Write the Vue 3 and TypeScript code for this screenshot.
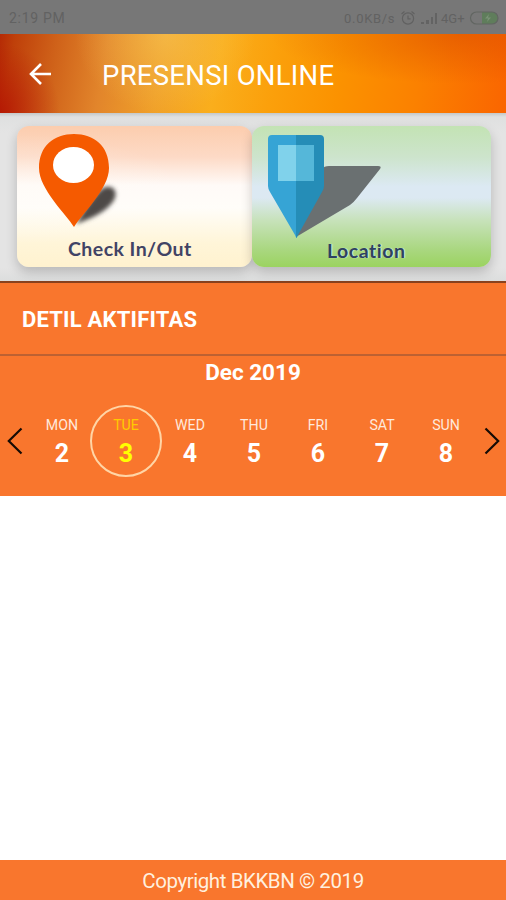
<script setup lang="ts">
import { ref } from 'vue'

interface Day {
  name: string
  date: number
}

const days: Day[] = [
  { name: 'MON', date: 2 },
  { name: 'TUE', date: 3 },
  { name: 'WED', date: 4 },
  { name: 'THU', date: 5 },
  { name: 'FRI', date: 6 },
  { name: 'SAT', date: 7 },
  { name: 'SUN', date: 8 },
]
const selected = ref(3)
</script>

<template>
  <div class="screen">
    <div class="status">
      <span class="time">2:19 PM</span>
      <div class="indicators">
        <span class="speed">0.0KB/s</span>
        <svg width="16" height="16" viewBox="0 0 16 16" fill="none" stroke="#616161" stroke-width="1.2">
          <circle cx="8" cy="8.5" r="5.6" />
          <path d="M8 5.5v3.3h2.600M1.500 4l3-2.500M14.500 4l-3-2.500" />
        </svg>
        <svg class="signal" width="20" height="14" viewBox="0 0 20 14" fill="#636363">
          <path d="M1 11h3v2H1zM6 9h3v4H6zM11 6h2v7h-2zM15 2h2v11h-2z" />
        </svg>
        <span class="network">4G+</span>
        <svg width="31" height="14" viewBox="0 0 31 14" fill="none">
          <path d="M13 1h10a6 6 0 0 1 0 12H13z" fill="#5f7d5b" />
          <rect x="1.500" y="1" width="27.500" height="12" rx="6" stroke="#626662" stroke-width="1.200" />
          <path d="M20 3l-4 4.500h3l-1 3.500 4-4.500h-3z" fill="#7a9276" />
        </svg>
      </div>
    </div>

    <header class="appbar">
      <button class="back" aria-label="Back">
        <svg width="24" height="24" viewBox="0 0 24 24" fill="none" stroke="#fff" stroke-width="2.600">
          <path d="M23 12H3M13 2L3 12l10 10" />
        </svg>
      </button>
      <h1>PRESENSI ONLINE</h1>
    </header>

    <nav class="tiles">
      <button class="tile checkin">
        <svg class="art" width="235" height="141" viewBox="0 0 235 141">
          <defs>
            <filter id="soft" x="-30%" y="-30%" width="160%" height="160%">
              <feGaussianBlur stdDeviation="2.200" />
            </filter>
          </defs>
          <path d="M59 98C68 82 78 66 88 61c9-2 13 5 9 13-5 9-18 17-38 24z" fill="#4d4947" filter="url(#soft)" />
          <path d="M57 101C49 88 22 63 22 42 22 20 37 8 57 8s35 12 35 34c0 21-27 46-35 59z" fill="#f55a00" />
          <ellipse cx="56.500" cy="39" rx="20.500" ry="18" fill="#fff" />
        </svg>
        <span class="label">Check In/Out</span>
      </button>
      <button class="tile location">
        <svg class="art" width="239" height="141" viewBox="0 0 239 141">
          <path d="M44 111L70 43q2-3 7-3h49q4 0 2 3L105 72q-3 4-7 7z" fill="#6a7071" />
          <path d="M45 9H20q-4 0-4 4v47q0 3 2 6l25 43q1 3 2 3z" fill="#36a4d5" />
          <path d="M44 9h24q4 0 4 4v47q0 3-2 6l-24 43q-1 3-2 3z" fill="#258db7" />
          <path d="M26 19h18v36H26z" fill="#80d2eb" />
          <path d="M44 19h18v36H44z" fill="#55b7d9" />
        </svg>
        <span class="label">Location</span>
      </button>
    </nav>

    <section class="activity">
      <h2>DETIL AKTIFITAS</h2>
      <div class="calendar">
        <p class="month">Dec 2019</p>
        <div class="week">
          <button class="arrow" aria-label="Previous week">
            <svg width="16" height="28" viewBox="0 0 16 28" fill="none" stroke="#160b05" stroke-width="2.200">
              <path d="M14.500 1.500L1.800 14l12.700 12.500" />
            </svg>
          </button>
          <div class="days">
            <button
              v-for="day in days"
              :key="day.date"
              class="day"
              :class="{ active: day.date === selected }"
              @click="selected = day.date"
            >
              <span class="name">{{ day.name }}</span>
              <span class="date">{{ day.date }}</span>
            </button>
          </div>
          <button class="arrow" aria-label="Next week">
            <svg width="16" height="28" viewBox="0 0 16 28" fill="none" stroke="#160b05" stroke-width="2.200">
              <path d="M1.500 1.500L14.200 14 1.500 26.500" />
            </svg>
          </button>
        </div>
      </div>
    </section>

    <main class="content"></main>
    <footer class="footer">Copyright BKKBN © 2019</footer>
  </div>
</template>

<style>
body {
  margin: 0;
}
</style>

<style scoped>
.screen {
  display: flex;
  flex-direction: column;
  width: 506px;
  height: 900px;
  overflow: hidden;
  background: #fff;
  font-family: Roboto, sans-serif;
}
button {
  padding: 0;
  border: 0;
  background: none;
  font: inherit;
  color: inherit;
}
h1,
h2,
p {
  margin: 0;
}
.status {
  display: flex;
  justify-content: space-between;
  align-items: center;
  box-sizing: border-box;
  flex: none;
  height: 34px;
  padding: 2px 6px 0 9px;
  background: #777;
  color: #626262;
  font-size: 14px;
}
.time {
  letter-spacing: 0.7px;
}
.indicators {
  display: flex;
  align-items: center;
}
.speed {
  width: 56px;
  font-size: 13px;
  letter-spacing: 0.7px;
}
.signal {
  margin: 0 1px 0 4px;
}
.network {
  width: 28px;
  font-size: 13px;
}
.appbar {
  display: flex;
  align-items: center;
  flex: none;
  height: 79px;
  color: #fff;
  background:
    radial-gradient(ellipse 190px 50px at 460px 0, rgba(205, 60, 0, 0.4), transparent),
    radial-gradient(ellipse 90px 80px at 165px 0, rgba(248, 205, 95, 0.5), transparent),
    radial-gradient(ellipse 60px 70px at 0 79px, rgba(175, 0, 0, 0.6), transparent),
    linear-gradient(100deg, #b52a05 0, #bf400a 3%, #cf6119 11%, #e2852b 21%, #f0a029 32%, #faae1c 43%, #fba00b 54%, #fb9200 67%, #fb8100 82%, #fa6500 100%);
}
.back {
  display: flex;
  margin-left: 27.500px;
}
h1 {
  margin: 5px 0 0 50.500px;
  font-size: 27.500px;
  font-weight: 400;
  line-height: 32px;
  letter-spacing: 0.28px;
}
.tiles {
  display: flex;
  box-sizing: border-box;
  flex: none;
  height: 168px;
  padding: 13px 15px 14px 17px;
  background: linear-gradient(#c4c8c9 0, #dfe0e0 4px, #e4e4e4 20px, #e4e4e4 155px, #dcdddd 100%);
}
.tile {
  position: relative;
  width: 235px;
  height: 141px;
  border-radius: 12px;
  box-shadow: 0 5px 12px rgba(0, 0, 0, 0.2);
  font-family: Lato, sans-serif;
  font-weight: 700;
}
.checkin {
  background:
    radial-gradient(ellipse at 0 45%, rgba(255, 253, 248, 0.4), transparent 50%),
    linear-gradient(#fccdae 0, #fddac6 22%, #fffaf7 42%, #fffdf9 58%, #fff5d8 83%, #fff2cf 100%);
}
.location {
  width: 239px;
  background: linear-gradient(#c3e3b4 0, #cde4cc 22%, #dce9f3 43%, #dce9f2 51%, #c7e2ba 67%, #a9d77f 88%, #9bd360 100%);
}
.art {
  display: block;
}
.label {
  position: absolute;
  left: 51px;
  bottom: 6px;
  color: #414365;
  font-size: 19.500px;
  line-height: 24px;
  letter-spacing: 0.45px;
  white-space: nowrap;
  font-variant-ligatures: none;
}
.location .label {
  left: 75px;
  bottom: 4px;
  color: #2e4260;
  letter-spacing: 0.5px;
  text-shadow: 1px 0 1px #e4f4d9;
}
.activity {
  flex: none;
  height: 215px;
  background: #f9762d;
  color: #fff;
}
h2 {
  box-sizing: border-box;
  height: 75px;
  padding: 2px 22px 0;
  border-top: 2px solid #8a421e;
  border-bottom: 2px solid #bd6132;
  font-size: 22px;
  font-weight: 700;
  line-height: 70px;
  letter-spacing: 0.2px;
}
.month {
  padding-top: 2px;
  text-align: center;
  font-size: 22.500px;
  font-weight: 700;
  line-height: 28px;
}
.week {
  display: flex;
  align-items: center;
  justify-content: space-between;
  padding: 19px 6px 0 7px;
}
.arrow {
  display: flex;
}
.days {
  display: grid;
  grid-template-columns: repeat(7, 64px);
  margin: 0 -1px 0 0;
}
.day {
  display: flex;
  flex-direction: column;
  align-items: center;
  box-sizing: border-box;
  width: 72px;
  height: 72px;
  margin: 0 -4px;
  padding-top: 10px;
  border: 2px solid transparent;
  border-radius: 50%;
}
.active {
  border-color: #ffd5a6;
  color: #ff0;
}
.name {
  color: #ffe9dc;
  font-size: 14.200px;
  line-height: 16px;
}
.active .name {
  color: #ffcb00;
}
.date {
  font-size: 25px;
  font-weight: 700;
  line-height: 30px;
  margin-top: 6px;
}
.content {
  flex: 1;
}
.footer {
  flex: none;
  height: 40px;
  background: #f9762d;
  color: #fff0df;
  font-size: 20.500px;
  line-height: 43px;
  letter-spacing: -0.43px;
  text-align: center;
}
</style>
